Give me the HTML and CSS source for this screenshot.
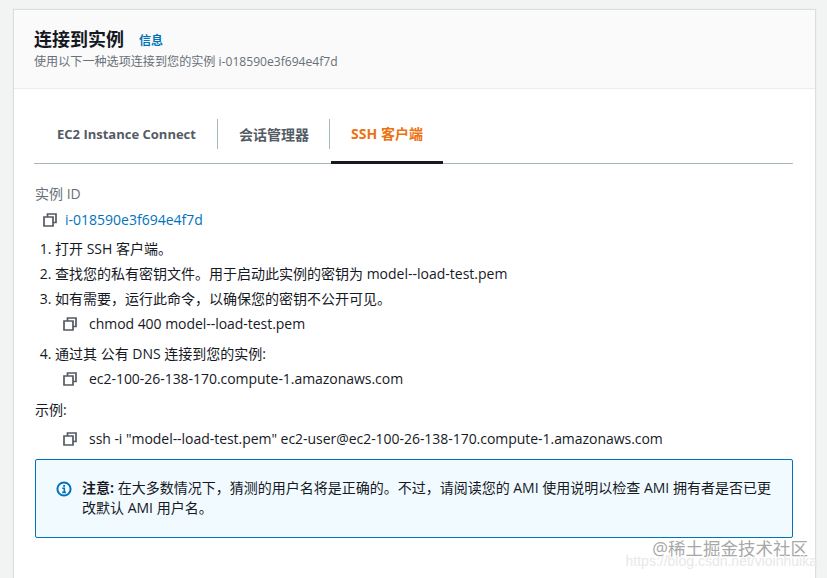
FILE: index.html
```html
<!DOCTYPE html>
<html lang="zh-CN">
<head>
<meta charset="utf-8">
<title>连接到实例</title>
<link rel="stylesheet" href="styles.css">
</head>
<body>
<svg class="sprite" width="0" height="0" aria-hidden="true"><symbol id="copy" viewBox="0 0 14 14"><path d="M4.5 4V1h8.5v8.5h-3" fill="none" stroke="currentColor" stroke-width="1.7"/><path d="M1 4h9v9H1z" fill="none" stroke="currentColor" stroke-width="1.7"/></symbol></svg>
<main class="card">
  <header class="card-head">
    <div class="title-row"><h1>连接到实例</h1><a class="info">信息</a></div>
    <p class="subtitle">使用以下一种选项连接到您的实例 i-018590e3f694e4f7d</p>
  </header>
  <section class="card-body">
    <nav class="tabs">
      <div class="tab tab-first">EC2 Instance Connect</div>
      <div class="tab tab-second">会话管理器</div>
      <div class="tab tab-active">SSH 客户端</div>
    </nav>
    <div class="label">实例 ID</div>
    <div class="copy-row id-row"><svg class="icon"><use href="#copy"/></svg><a class="link">i-018590e3f694e4f7d</a></div>
    <ol class="steps">
      <li>打开 SSH 客户端。</li>
      <li>查找您的私有密钥文件。用于启动此实例的密钥为 model--load-test.pem</li>
      <li>如有需要，运行此命令，以确保您的密钥不公开可见。</li>
    </ol>
    <div class="copy-row cmd"><svg class="icon"><use href="#copy"/></svg><span>chmod 400 model--load-test.pem</span></div>
    <ol class="steps step-four" start="4">
      <li>通过其 公有 DNS 连接到您的实例:</li>
    </ol>
    <div class="copy-row cmd"><svg class="icon"><use href="#copy"/></svg><span>ec2-100-26-138-170.compute-1.amazonaws.com</span></div>
    <div class="example">示例:</div>
    <div class="copy-row cmd ex-cmd"><svg class="icon"><use href="#copy"/></svg><span>ssh -i "model--load-test.pem" ec2-user@ec2-100-26-138-170.compute-1.amazonaws.com</span></div>
    <div class="alert">
      <svg class="alert-icon" viewBox="0 0 16 16"><circle cx="8" cy="8" r="6.6" fill="none" stroke="currentColor" stroke-width="2"/><path d="M6.2 7.2H8.3V11.4M6.2 11.4H10" fill="none" stroke="currentColor" stroke-width="1.6"/><rect x="7.2" y="4" width="1.8" height="1.8" fill="currentColor"/></svg>
      <p><strong>注意:</strong> 在大多数情况下，猜测的用户名将是正确的。不过，请阅读您的 AMI 使用说明以检查 AMI 拥有者是否已更改默认 AMI 用户名。</p>
    </div>
  </section>
</main>
<div class="watermark">
  <div class="wm-main">@稀土掘金技术社区</div>
  <div class="wm-sub">https://blog.csdn.net/vioinhuika</div>
</div>
</body>
</html>
```
FILE: styles.css
```css
* { box-sizing: border-box; }
html, body { margin: 0; height: 578px; overflow: hidden; }
body {
  position: relative;
  background: #f2f3f3;
  padding: 10px 12px 0 14px;
  font-family: "Open Sans", "Noto Sans CJK SC", sans-serif;
  font-size: 14px;
  color: #16191f;
}
.sprite { position: absolute; }
.card {
  height: 568px;
  background: #fff;
  box-shadow: 0 0 1px 1px #dcdddd;
}
.card-head {
  height: 79px;
  padding: 16px 20px 0;
  background: #fafafa;
  border-bottom: 1px solid #eaeded;
}
.title-row { display: flex; align-items: center; height: 27px; }
h1 { margin: 0; font-size: 18px; font-weight: 700; line-height: 27px; }
.info { margin: 1px 0 0 15px; font-size: 12px; font-weight: 700; color: #0073bb; }
.subtitle { margin: 1px 0 0; font-size: 12.1px; line-height: 16px; color: #687078; }
.card-body { padding: 0 22px 0 20px; }
.tabs {
  display: flex;
  height: 75px;
  padding-top: 30px;
  border-bottom: 1px solid #aab7b8;
}
.tab {
  display: flex;
  align-items: center;
  justify-content: center;
  height: 30px;
  font-weight: 700;
  color: #545b64;
}
.tab-first { width: 184px; padding-left: 2px; font-size: 13px; border-right: 1px solid #aab7b8; }
.tab-second { width: 112px; padding-left: 1px; border-right: 1px solid #aab7b8; }
.tab-active { width: 112px; height: 45px; margin-left: 1px; padding-bottom: 15px; color: #ec7211; border-bottom: 3px solid #16191f; }
.label { margin: 21px 0 0 1px; line-height: 18px; color: #687078; }
.copy-row { display: flex; align-items: center; line-height: 20px; }
.icon { width: 14px; height: 14px; color: #545b64; flex: none; }
.id-row { margin: 7px 0 0 9px; gap: 8px; }
.link { color: #0073bb; }
.steps { margin: 6px 0 0; padding: 0 0 0 21px; line-height: 25px; }
.cmd { margin: 3px 0 0 29px; gap: 12px; letter-spacing: -0.04px; }
.step-four { margin-top: 7px; }
.example { margin: 11px 0 0 1px; font-size: 14px; line-height: 20px; }
.ex-cmd { margin-top: 9px; }
.alert {
  display: flex;
  gap: 10px;
  height: 79px;
  margin: 10px 0 0 1px;
  padding: 18px 8px 0 20px;
  background: #f1faff;
  border: 1px solid #0073bb;
  border-radius: 2px;
}
.alert-icon { width: 16px; height: 16px; margin-top: 3px; flex: none; color: #0073bb; }
.alert p { margin: 0; line-height: 20px; }
.watermark { position: absolute; right: 10px; bottom: 10px; text-align: right; }
.wm-main { font-size: 17.5px; line-height: 20px; margin: 0 9px -4px 0; color: #a8a8a8; }
.wm-sub { font-family: "Liberation Sans", sans-serif; font-size: 14px; line-height: 14px; color: #e8e8e8; }
```
